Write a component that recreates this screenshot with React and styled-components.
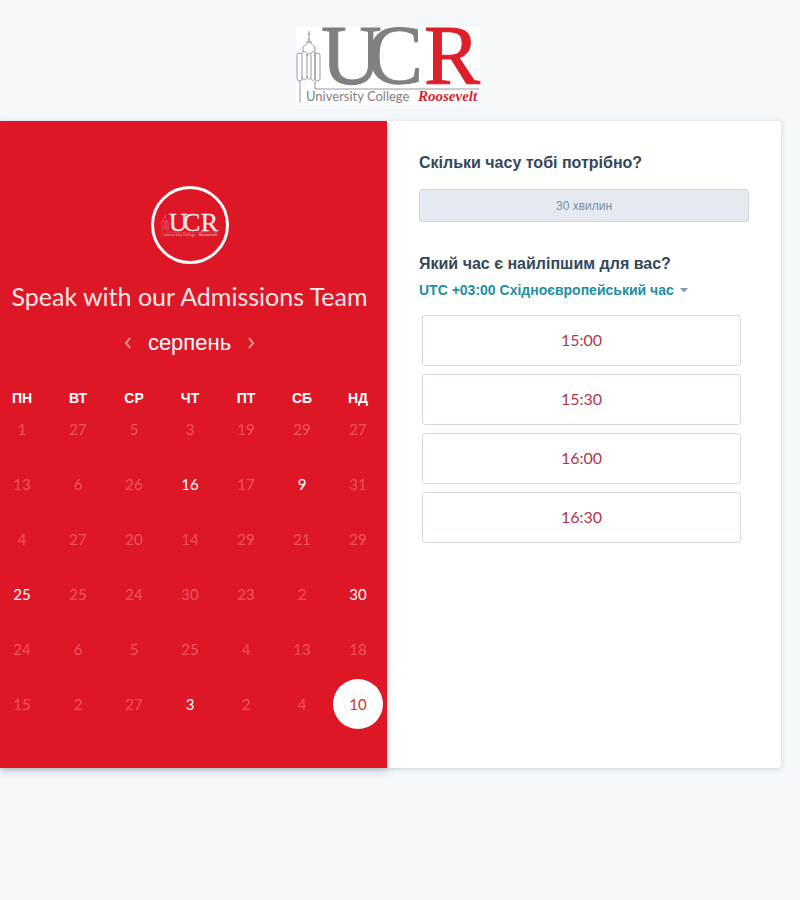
import React, { useState } from "react";
import styled, { createGlobalStyle } from "styled-components";

const GlobalStyle = createGlobalStyle`
  * { box-sizing: border-box; }
  body {
    margin: 0;
    background: #f4f8fb;
    color: #33475b;
    font-family: "Lato", "Liberation Sans", sans-serif;
  }
  button, select { font: inherit; cursor: pointer; }
`;

const Page = styled.div`
  min-height: 100vh;
  padding-right: 19px;
`;

const Header = styled.header`
  display: flex;
  justify-content: center;
  padding: 27px 6px 16px 0;
`;

const LogoSvg = styled.svg`
  display: block;
  width: ${(p) => p.$width}px;
  height: auto;
  overflow: visible;
  background: ${(p) => (p.$mono ? "transparent" : "#fff")};
`;

const Card = styled.main`
  display: grid;
  grid-template-columns: 387fr 394fr;
  min-height: 647px;
  background: #fff;
  border-radius: 0 4px 4px 0;
  box-shadow: 0 1px 5px rgba(45, 62, 80, 0.22);
`;

const CalendarPanel = styled.section`
  display: flex;
  flex-direction: column;
  align-items: center;
  padding-top: 65px;
  background: #dd1726;
  color: #fff;
  overflow: hidden;
  box-shadow: 0 4px 8px rgba(45, 62, 80, 0.2);
`;

const Avatar = styled.div`
  display: flex;
  align-items: center;
  justify-content: center;
  width: 78px;
  height: 78px;
  margin-right: 8px;
  border: 3px solid #fff;
  border-radius: 50%;
`;

const Title = styled.h1`
  margin: 16px 8px 0 0;
  font-size: 25px;
  line-height: 32px;
  font-weight: 400;
  white-space: nowrap;
  color: #fbe6e7;
`;

const MonthNav = styled.div`
  display: flex;
  align-items: center;
  gap: 10px;
  margin: 15px 8px 0 0;
`;

const Month = styled.h2`
  margin: 0;
  font: 400 22px/32px "Liberation Sans", sans-serif;
`;

const ArrowButton = styled.button`
  display: flex;
  align-items: center;
  justify-content: center;
  width: 20px;
  height: 24px;
  padding: 0;
  border: 0;
  background: none;
  color: #f39aa1;
`;

const Calendar = styled.table`
  align-self: flex-start;
  width: calc(100% + 5px);
  margin: 33px 0 0 -6px;
  table-layout: fixed;
  border-collapse: collapse;
`;

const Weekday = styled.th`
  height: 12px;
  padding: 0;
  font: 700 14px/12px "Liberation Sans", sans-serif;
`;

const DayCell = styled.td`
  height: 55px;
  padding: 0;
  vertical-align: top;
  text-align: center;
`;

const Day = styled.button`
  width: 50px;
  height: 50px;
  padding: 0;
  border: 0;
  border-radius: 50%;
  background: ${(p) => (p.$selected ? "#fff" : "transparent")};
  color: ${(p) => (p.$selected ? "#c8372f" : "#fff")};
  font-size: 15px;
  line-height: 20px;

  &:disabled {
    color: #ee555f;
    cursor: default;
  }
`;

const BookingPanel = styled.section`
  padding: 32px;
`;

const Heading = styled.h3`
  margin: 0;
  font: 700 16px/20px "Liberation Sans", sans-serif;
`;

const Duration = styled.button`
  display: block;
  width: 100%;
  height: 33px;
  margin: 16px 0 32px;
  border: 1px solid #cbd6e2;
  border-radius: 3px;
  background: #e5eaf1;
  color: #7c8ea3;
  font-family: "Liberation Sans", sans-serif;
  font-size: 12px;
`;

const ZoneField = styled.label`
  display: flex;
  align-items: center;
  gap: 6px;
  width: max-content;
  margin-top: 6px;
  color: #8297ad;
`;

const ZoneSelect = styled.select`
  appearance: none;
  padding: 0;
  border: 0;
  background: none;
  color: #218f9f;
  font: 700 14px/20px "Liberation Sans", sans-serif;
`;

const SlotList = styled.ul`
  display: grid;
  gap: 8px;
  margin: 15px 8px 0 3px;
  padding: 0;
  list-style: none;
`;

const Slot = styled.button`
  display: block;
  width: 100%;
  height: 51px;
  padding: 0 0 2px;
  border: 1px solid #d3dae3;
  border-radius: 3px;
  background: #fff;
  color: #b23648;
  font-size: 16px;
`;

const weekdays = ["ПН", "ВТ", "СР", "ЧТ", "ПТ", "СБ", "НД"];
const weeks = [
  [1, 27, 5, 3, 19, 29, 27],
  [13, 6, 26, 16, 17, 9, 31],
  [4, 27, 20, 14, 29, 21, 29],
  [25, 25, 24, 30, 23, 2, 30],
  [24, 6, 5, 25, 4, 13, 18],
  [15, 2, 27, 3, 2, 4, 10],
];
const openDays = ["1-3", "1-5", "3-0", "3-6", "5-3", "5-6"];
const slots = ["15:00", "15:30", "16:00", "16:30"];

function Logo({ width, mono }) {
  const gray = mono ? "#fde9ea" : "#808084";
  const line = mono ? "#f08a92" : "#98989c";
  const red = mono ? "#fde9ea" : "#dc1f2b";
  const caption = mono ? "#f6b4b9" : gray;
  const captionRed = mono ? "#f6b4b9" : red;
  const serif = '"Liberation Serif", serif';
  return (
    <LogoSvg $width={width} $mono={mono} viewBox="0 0 184 78" role="img" aria-label="UCR University College Roosevelt">
      <g fill="none" stroke={line} strokeWidth="1">
        <path d="M13 4v7M11.500 7h3M13 11c0 4-2 6-6 9v5M13 11c0 4 2 6 6 9v10M10 15h6" />
        <rect x="1" y="26" width="5" height="28" rx="2.500" />
        <path d="M6 27c0-3 5-3 5 0v22c0 5-5 5-5 0M11 29c0-3 4-3 4 0v20c0 4-4 4-4 0M15 27c0-3 4-3 4 0v24c0 3-4 3-4 0" />
        <rect x="19" y="26" width="5" height="28" rx="2.500" />
        <path d="M4 54v22M19 54v8h164" />
      </g>
      <g fontFamily={serif} fontSize="84" strokeWidth="1">
        <text x="25" y="57" fill={gray} stroke={gray}>U</text>
        <text x="71" y="57" fill={gray} stroke={gray}>C</text>
        <text x="128" y="57" fill={red} stroke={red}>R</text>
      </g>
      <text x="10" y="74" fill={caption} fontFamily="Lato, sans-serif" fontSize="13">University College</text>
      <text x="122" y="74" fill={captionRed} fontFamily={serif} fontSize="15" fontWeight="700" fontStyle="italic">Roosevelt</text>
    </LogoSvg>
  );
}

function Chevron({ d }) {
  return (
    <svg width="8" height="12" viewBox="0 0 8 12" fill="none" stroke="currentColor" strokeWidth="2" aria-hidden="true">
      <path d={d} />
    </svg>
  );
}

export default function App() {
  const [selected, setSelected] = useState("5-6");
  return (
    <Page>
      <GlobalStyle />
      <Header>
        <Logo width={184} />
      </Header>
      <Card>
        <CalendarPanel>
          <Avatar>
            <Logo width={57} mono />
          </Avatar>
          <Title>Speak with our Admissions Team</Title>
          <MonthNav>
            <ArrowButton aria-label="Попередній місяць">
              <Chevron d="M6 1 2 6l4 5" />
            </ArrowButton>
            <Month>серпень</Month>
            <ArrowButton aria-label="Наступний місяць">
              <Chevron d="m2 1 4 5-4 5" />
            </ArrowButton>
          </MonthNav>
          <Calendar>
            <thead>
              <tr>
                {weekdays.map((name) => (
                  <Weekday key={name} scope="col">{name}</Weekday>
                ))}
              </tr>
            </thead>
            <tbody>
              {weeks.map((week, row) => (
                <tr key={row}>
                  {week.map((day, col) => {
                    const id = `${row}-${col}`;
                    return (
                      <DayCell key={id}>
                        <Day
                          disabled={!openDays.includes(id)}
                          $selected={selected === id}
                          aria-pressed={selected === id}
                          onClick={() => setSelected(id)}
                        >
                          {day}
                        </Day>
                      </DayCell>
                    );
                  })}
                </tr>
              ))}
            </tbody>
          </Calendar>
        </CalendarPanel>
        <BookingPanel>
          <Heading>Скільки часу тобі потрібно?</Heading>
          <Duration>30 хвилин</Duration>
          <Heading>Який час є найліпшим для вас?</Heading>
          <ZoneField>
            <ZoneSelect aria-label="Часовий пояс">
              <option>UTC +03:00 Східноєвропейський час</option>
            </ZoneSelect>
            <svg width="8" height="5" viewBox="0 0 8 5" fill="currentColor" aria-hidden="true">
              <path d="M0 0h8L4 4.500z" />
            </svg>
          </ZoneField>
          <SlotList>
            {slots.map((time) => (
              <li key={time}>
                <Slot>{time}</Slot>
              </li>
            ))}
          </SlotList>
        </BookingPanel>
      </Card>
    </Page>
  );
}
